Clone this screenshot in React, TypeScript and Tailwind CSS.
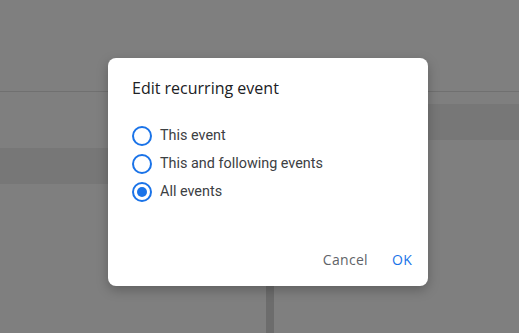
import React from "react";

function Radio({ checked }: { checked?: boolean }) {
  return (
    <div className="w-5 h-5 rounded-full border-2 border-[#1a73e8] flex items-center justify-center shrink-0">
      {checked && <div className="w-2.5 h-2.5 rounded-full bg-[#1a73e8]" />}
    </div>
  );
}

export default function App() {
  const options = [
    { label: "This event", checked: false },
    { label: "This and following events", checked: false },
    { label: "All events", checked: true },
  ];
  return (
    <div className="relative w-[519px] h-[333px] overflow-hidden bg-[#7f7f7f]">
      <div className="h-[92px] border-b border-[#707070]" />
      <div className="flex h-[241px]">
        <div className="w-[266px]">
          <div className="mt-[56px] h-[36px] bg-[#777777]" />
        </div>
        <div className="w-[8px] bg-[#6c6c6c]" />
        <div className="flex-1">
          <div className="mt-[12px] h-[36px] bg-[#777777]" />
        </div>
      </div>

      <div className="absolute left-[108px] top-[58px] w-[320px] h-[228px] bg-white rounded-lg shadow-[0_4px_12px_rgba(0,0,0,0.25)] flex flex-col">
        <div className="pt-[18px] px-6 text-[16px] leading-6 font-medium text-[#202124] font-['Open_Sans',sans-serif]">
          Edit recurring event
        </div>
        <div className="mt-[22px] px-6 flex flex-col font-['Roboto',sans-serif]">
          {options.map((o) => (
            <div key={o.label} className="h-[28px] flex items-center gap-2">
              <Radio checked={o.checked} />
              <span className="text-[14.4px] text-[#3c4043]">{o.label}</span>
            </div>
          ))}
        </div>
        <div className="mt-auto mb-[9px] pr-2 flex justify-end gap-[8px] font-['Open_Sans',sans-serif] text-[14px] font-medium tracking-[0.3px]">
          <button className="h-9 px-2 text-[#5f6368]">Cancel</button>
          <button className="h-9 px-2 text-[#1a73e8]">OK</button>
        </div>
      </div>
    </div>
  );
}
